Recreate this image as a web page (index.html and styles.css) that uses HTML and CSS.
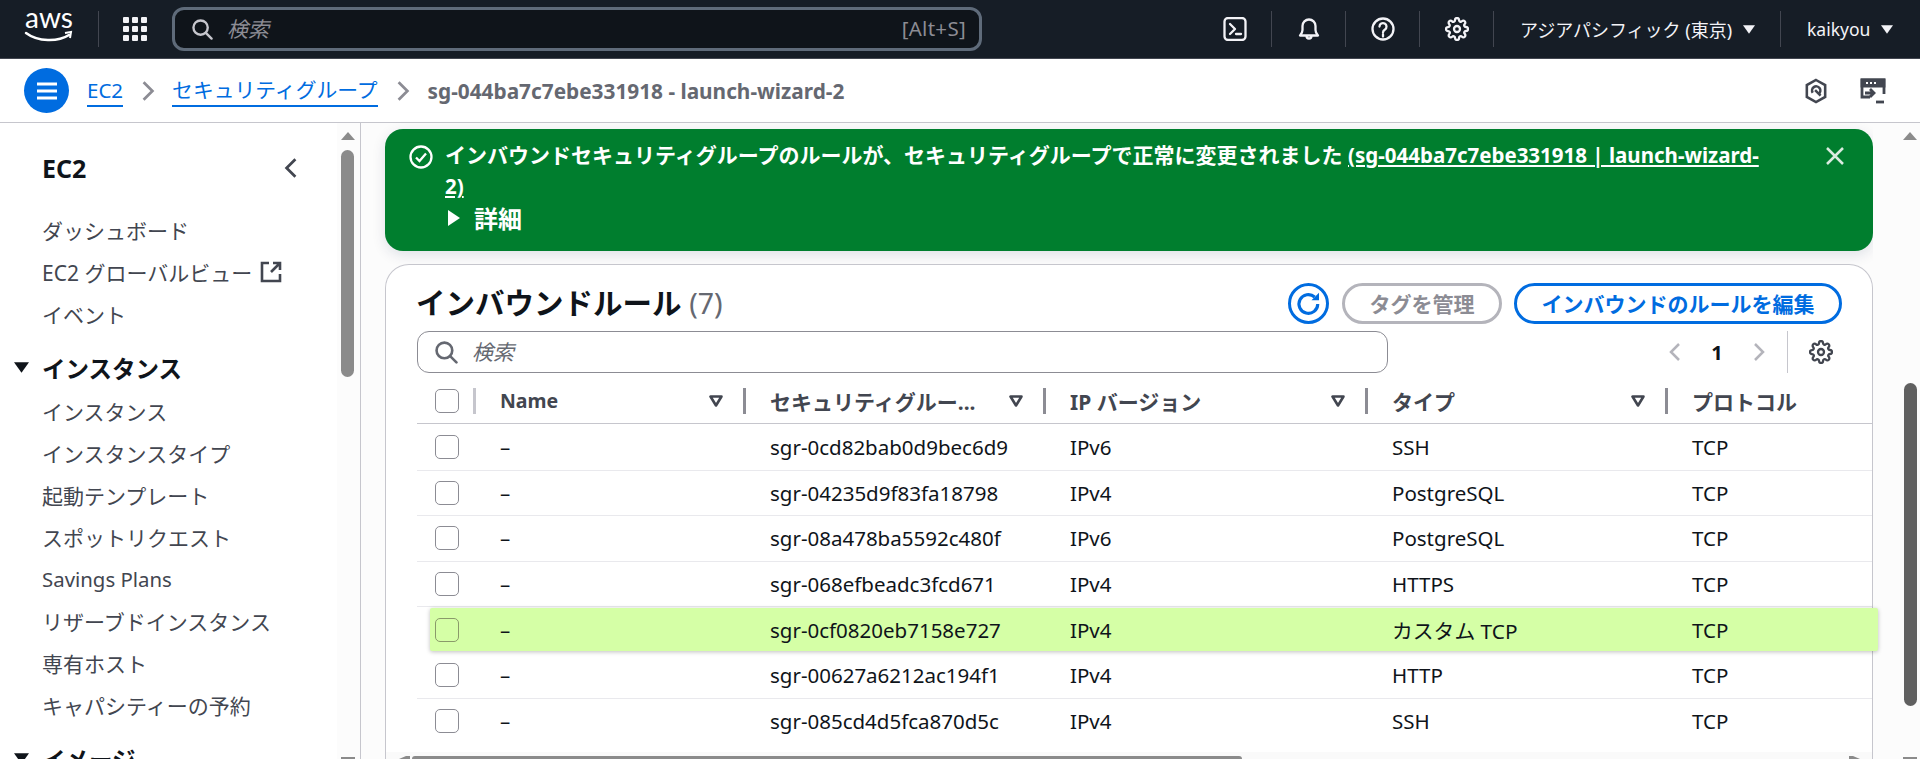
FILE: index.html
```html
<!DOCTYPE html>
<html lang="ja">
<head>
<meta charset="utf-8">
<title>EC2 セキュリティグループ</title>
<link rel="stylesheet" href="styles.css">
</head>
<body>
<svg class="sprite" aria-hidden="true">
  <symbol id="i-gear" viewBox="0 0 24 24"><circle cx="12" cy="12" r="3"/><path d="M19.4 15a1.65 1.65 0 0 0 .33 1.82l.06.06a2 2 0 0 1 0 2.83 2 2 0 0 1-2.83 0l-.06-.06a1.65 1.65 0 0 0-1.82-.33 1.65 1.65 0 0 0-1 1.51V21a2 2 0 0 1-2 2 2 2 0 0 1-2-2v-.09A1.65 1.65 0 0 0 9 19.4a1.65 1.65 0 0 0-1.82.33l-.06.06a2 2 0 0 1-2.83 0 2 2 0 0 1 0-2.83l.06-.06a1.65 1.65 0 0 0 .33-1.82 1.65 1.65 0 0 0-1.51-1H3a2 2 0 0 1-2-2 2 2 0 0 1 2-2h.09A1.65 1.65 0 0 0 4.6 9a1.65 1.65 0 0 0-.33-1.82l-.06-.06a2 2 0 0 1 0-2.83 2 2 0 0 1 2.83 0l.06.06a1.65 1.65 0 0 0 1.82.33H9a1.65 1.65 0 0 0 1-1.51V3a2 2 0 0 1 2-2 2 2 0 0 1 2 2v.09a1.65 1.65 0 0 0 1 1.51 1.65 1.65 0 0 0 1.82-.33l.06-.06a2 2 0 0 1 2.83 0 2 2 0 0 1 0 2.83l-.06.06a1.65 1.65 0 0 0-.33 1.82V9a1.65 1.65 0 0 0 1.51 1H21a2 2 0 0 1 2 2 2 2 0 0 1-2 2h-.09a1.65 1.65 0 0 0-1.51 1z"/></symbol>
  <symbol id="i-search" viewBox="0 0 22 22"><circle cx="9" cy="9" r="7.5"/><path d="M14.5 14.5 20.5 20.5"/></symbol>
  <symbol id="i-sort" viewBox="0 0 14 12"><path d="M1.5 1.5h11L7 10.5z"/></symbol>
  <symbol id="i-down" viewBox="0 0 14 10"><path d="M0 0h14L7 10z"/></symbol>
</svg>

<header class="topbar">
  <div class="logo">
    <svg class="logo-svg" viewBox="0 0 48 30"><text class="logo-text" x="24" y="15" text-anchor="middle">aws</text><path class="logo-smile" d="M1 20c12 9 32 9 43 2"/><path class="logo-arrow" d="M40 20l6-1-1 6"/></svg>
  </div>
  <span class="top-sep"></span>
  <svg class="grid-icon" viewBox="0 0 24 24"><rect x="0" y="0" width="6" height="6" rx="1"/><rect x="9" y="0" width="6" height="6" rx="1"/><rect x="18" y="0" width="6" height="6" rx="1"/><rect x="0" y="9" width="6" height="6" rx="1"/><rect x="9" y="9" width="6" height="6" rx="1"/><rect x="18" y="9" width="6" height="6" rx="1"/><rect x="0" y="18" width="6" height="6" rx="1"/><rect x="9" y="18" width="6" height="6" rx="1"/><rect x="18" y="18" width="6" height="6" rx="1"/></svg>
  <div class="top-search">
    <svg class="ic-search-top"><use href="#i-search"/></svg>
    <span class="top-search-ph">検索</span>
    <span class="top-search-key">[Alt+S]</span>
  </div>
  <nav class="top-actions">
    <div class="slot"><svg class="top-ic" viewBox="0 0 24 24"><rect x="1.500" y="1" width="21" height="22" rx="3.500"/><path d="M7 7l5 5-5 5M13 17h5"/></svg></div>
    <div class="slot"><svg class="top-ic" viewBox="0 0 24 24"><path d="M3 18.500h18c-2-2-2.500-3.500-2.500-5.500V9A6.500 6.500 0 0 0 5.500 9v4c0 2-.5 3.500-2.500 5.500zM9.500 19a2.500 2.500 0 0 0 5 0"/></svg></div>
    <div class="slot"><svg class="top-ic" viewBox="0 0 24 24"><circle cx="12" cy="12" r="10.500"/><path d="M8.500 9.500a3.500 3.500 0 1 1 5.500 3c-1.300.8-2 1.500-2 3M12 17.500v2"/></svg></div>
    <div class="slot"><svg class="top-ic"><use href="#i-gear"/></svg></div>
    <div class="slot slot-region"><span>アジアパシフィック (東京)</span><svg class="ic-down"><use href="#i-down"/></svg></div>
    <div class="slot slot-user"><span>kaikyou</span><svg class="ic-down"><use href="#i-down"/></svg></div>
  </nav>
</header>

<div class="crumbbar">
  <button class="menu-btn"><svg viewBox="0 0 22 18"><path d="M1 2h20M1 9h20M1 16h20"/></svg></button>
  <a class="crumb crumb-first">EC2</a>
  <svg class="crumb-chev" viewBox="0 0 12 20"><path d="M2 2l8 8-8 8"/></svg>
  <a class="crumb crumb-ja">セキュリティグループ</a>
  <svg class="crumb-chev" viewBox="0 0 12 20"><path d="M2 2l8 8-8 8"/></svg>
  <span class="crumb-current">sg-044ba7c7ebe331918 - launch-wizard-2</span>
  <div class="crumb-tools">
    <svg class="tool-ic tool-hex" viewBox="0 0 24 28"><path d="M12 2 22 7.500v13L12 26 2 20.500v-13z"/><path d="M8.500 16a4.500 4.500 0 1 1 6.500 1"/><path d="M11 13l6 6"/></svg>
    <svg class="tool-ic tool-term" viewBox="0 0 26 26"><path d="M10 19H2V2h22v14"/><path class="tool-fill" d="M2 2h22v6H2z"/><path class="tool-dots" d="M6 4h2v2H6zM10 4h2v2h-2zM14 4h2v2h-2z"/><path d="M5 15h9M10 11l4 4-4 4"/><path d="M16 24h8"/></svg>
  </div>
</div>

<div class="workspace">
  <aside class="sidebar">
    <div class="side-nav">
      <div class="side-head"><h2 class="side-title">EC2</h2><svg class="side-close" viewBox="0 0 12 20"><path d="M10 2 2 10l8 8"/></svg></div>
      <a class="side-item">ダッシュボード</a>
      <a class="side-item">EC2 グローバルビュー <svg class="ext-ic" viewBox="0 0 22 22"><path d="M9 2H2v18h18v-7"/><path d="M13 2h7v7M20 2l-9 9"/></svg></a>
      <a class="side-item">イベント</a>
      <div class="side-group"><svg class="group-caret"><use href="#i-down"/></svg>インスタンス</div>
      <a class="side-item">インスタンス</a>
      <a class="side-item">インスタンスタイプ</a>
      <a class="side-item">起動テンプレート</a>
      <a class="side-item">スポットリクエスト</a>
      <a class="side-item side-latin">Savings Plans</a>
      <a class="side-item">リザーブドインスタンス</a>
      <a class="side-item">専有ホスト</a>
      <a class="side-item">キャパシティーの予約</a>
      <div class="side-group"><svg class="group-caret"><use href="#i-down"/></svg>イメージ</div>
    </div>
    <div class="vbar vbar-side">
      <span class="arrow-up"></span>
      <span class="thumb thumb-side"></span>
      <span class="arrow-end"></span>
    </div>
  </aside>

  <main class="main">
    <div class="content">
      <section class="flash">
        <svg class="flash-ic" viewBox="0 0 24 24"><circle cx="12" cy="12" r="10.500"/><path d="M7 12.500l3.500 3.500L17 8.500"/></svg>
        <div class="flash-body">
          <p class="flash-msg">インバウンドセキュリティグループのルールが、セキュリティグループで正常に変更されました <a class="flash-link">(sg-044ba7c7ebe331918 | launch-wizard-<wbr>2)</a></p>
          <div class="flash-detail"><span class="tri-right"></span>詳細</div>
        </div>
        <svg class="flash-close" viewBox="0 0 20 20"><path d="M2 2l16 16M18 2 2 18"/></svg>
      </section>

      <section class="card">
        <div class="card-head">
          <h1 class="card-title">インバウンドルール <span class="count">(7)</span></h1>
          <div class="card-actions">
            <button class="btn-round"><svg viewBox="0 0 24 24"><path d="M19 12a7.500 7.500 0 1 1-2.500-5.600"/><path class="btn-fill" d="M14 9h6V3z"/></svg></button>
            <button class="btn btn-off">タグを管理</button>
            <button class="btn btn-on">インバウンドのルールを編集</button>
          </div>
        </div>
        <div class="filter-row">
          <div class="filter">
            <svg class="ic-search"><use href="#i-search"/></svg>
            <span class="filter-ph">検索</span>
          </div>
          <div class="pager">
            <svg class="pg-chev" viewBox="0 0 12 20"><path d="M10 2 2 10l8 8"/></svg>
            <span class="pg-num">1</span>
            <svg class="pg-chev" viewBox="0 0 12 20"><path d="M2 2l8 8-8 8"/></svg>
            <span class="pg-sep"></span>
            <svg class="pg-gear"><use href="#i-gear"/></svg>
          </div>
        </div>

        <div class="table">
          <div class="row row-head">
            <div class="cell cell-check"><span class="check"></span></div>
            <div class="cell th"><span class="th-latin">Name</span><svg class="ic-sort"><use href="#i-sort"/></svg></div>
            <div class="cell th"><span>セキュリティグルー...</span><svg class="ic-sort"><use href="#i-sort"/></svg></div>
            <div class="cell th"><span>IP バージョン</span><svg class="ic-sort"><use href="#i-sort"/></svg></div>
            <div class="cell th"><span>タイプ</span><svg class="ic-sort"><use href="#i-sort"/></svg></div>
            <div class="cell th th-last"><span>プロトコル</span></div>
          </div>
          <div class="row"><div class="cell cell-check"><span class="check"></span></div><div class="cell">–</div><div class="cell">sgr-0cd82bab0d9bec6d9</div><div class="cell">IPv6</div><div class="cell">SSH</div><div class="cell">TCP</div></div>
          <div class="row"><div class="cell cell-check"><span class="check"></span></div><div class="cell">–</div><div class="cell">sgr-04235d9f83fa18798</div><div class="cell">IPv4</div><div class="cell">PostgreSQL</div><div class="cell">TCP</div></div>
          <div class="row"><div class="cell cell-check"><span class="check"></span></div><div class="cell">–</div><div class="cell">sgr-08a478ba5592c480f</div><div class="cell">IPv6</div><div class="cell">PostgreSQL</div><div class="cell">TCP</div></div>
          <div class="row"><div class="cell cell-check"><span class="check"></span></div><div class="cell">–</div><div class="cell">sgr-068efbeadc3fcd671</div><div class="cell">IPv4</div><div class="cell">HTTPS</div><div class="cell">TCP</div></div>
          <div class="row row-hl"><div class="cell cell-check"><span class="check"></span></div><div class="cell">–</div><div class="cell">sgr-0cf0820eb7158e727</div><div class="cell">IPv4</div><div class="cell cell-ja">カスタム TCP</div><div class="cell">TCP</div></div>
          <div class="row"><div class="cell cell-check"><span class="check"></span></div><div class="cell">–</div><div class="cell">sgr-00627a6212ac194f1</div><div class="cell">IPv4</div><div class="cell">HTTP</div><div class="cell">TCP</div></div>
          <div class="row row-end"><div class="cell cell-check"><span class="check"></span></div><div class="cell">–</div><div class="cell">sgr-085cd4d5fca870d5c</div><div class="cell">IPv4</div><div class="cell">SSH</div><div class="cell">TCP</div></div>
        </div>
        <div class="hbar">
          <span class="arrow-left"></span>
          <span class="thumb-h"></span>
          <span class="arrow-right"></span>
        </div>
      </section>
    </div>
    <div class="vbar vbar-main">
      <span class="arrow-up"></span>
      <span class="thumb thumb-main"></span>
      <span class="arrow-end"></span>
    </div>
  </main>
</div>
</body>
</html>
```

FILE: styles.css
```css
* { box-sizing: border-box; }
html, body { margin: 0; padding: 0; height: 759px; overflow: hidden; }
body {
  font-family: "Noto Sans", "Noto Sans CJK JP", sans-serif;
  font-size: 20px;
  color: #0f141a;
  background: #fff;
  display: flex;
  flex-direction: column;
}
.sprite { width: 0; height: 0; position: absolute; }
h1, h2, p { margin: 0; }
button { font-family: inherit; cursor: pointer; padding: 0; background: none; }

/* top bar */
.topbar {
  flex: 0 0 59px;
  display: flex;
  align-items: center;
  background: #161d26;
  border-bottom: 1px solid #424650;
  padding-left: 25px;
  color: #fff;
}
.logo { width: 48px; height: 30px; margin-bottom: 2px; }
.logo-svg { width: 48px; height: 30px; display: block; overflow: visible; }
.logo-text { font: 400 28px "Lato", "Noto Sans", sans-serif; fill: #fff; }
.logo-smile { fill: none; stroke: #fff; stroke-width: 2.500; stroke-linecap: round; }
.logo-arrow { fill: none; stroke: #fff; stroke-width: 2; }
.top-sep { width: 1px; height: 36px; background: #424650; margin-left: 25px; }
.grid-icon { width: 24px; height: 24px; margin-left: 24px; fill: #f3f3f7; }
.top-search {
  width: 810px;
  height: 44px;
  margin-left: 25px;
  display: flex;
  align-items: center;
  background: #0f141a;
  border: 3px solid #5f6b7a;
  border-radius: 12px;
  padding: 0 13px 0 17px;
}
.ic-search-top { width: 21px; height: 21px; fill: none; stroke: #c6c6cd; stroke-width: 2.500; stroke-linecap: round; }
.top-search-ph { margin: 0 0 3px 14px; font-style: italic; font-size: 21px; color: #8c8c94; }
.top-search-key { margin: 0 0 3px auto; font-size: 20.500px; letter-spacing: .3px; color: #8c8c94; }
.top-actions { margin-left: auto; display: flex; align-items: center; }
.slot {
  height: 36px;
  width: 74px;
  display: flex;
  align-items: center;
  justify-content: center;
  border-right: 1px solid #424650;
  font-size: 17.500px;
  color: #f3f3f7;
}
.top-ic { width: 24px; height: 24px; fill: none; stroke: #f3f3f7; stroke-width: 2.300; stroke-linecap: round; stroke-linejoin: round; }
.slot-region { width: 287px; justify-content: flex-start; padding-left: 26px; font-size: 18px; }
.slot-user { width: 139px; justify-content: flex-start; padding-left: 26px; border-right: 0; }
.ic-down { width: 12px; height: 9px; margin-left: 11px; fill: #f3f3f7; }

/* breadcrumbs */
.crumbbar {
  flex: 0 0 64px;
  display: flex;
  align-items: center;
  border-bottom: 1px solid #c6c6cd;
  padding-left: 24px;
}
.menu-btn {
  width: 45px;
  height: 45px;
  border: 0;
  border-radius: 50%;
  background: #006ce0;
  display: flex;
  align-items: center;
  justify-content: center;
}
.menu-btn svg { width: 22px; height: 18px; fill: none; stroke: #fff; stroke-width: 3; }
.crumb {
  color: #006ce0;
  font-size: 20.500px;
  line-height: 30px;
  border-bottom: 2px solid #006ce0;
}
.crumb-ja { font-size: 20.800px; margin-left: -1px; }
.crumb-first { margin-left: 18px; }
.crumb-chev { width: 14px; height: 22px; margin: 0 18px; fill: none; stroke: #8c8c94; stroke-width: 2.500; }
.crumb-current { font-size: 20.800px; font-weight: 700; color: #656871; }
.crumb-tools { margin-left: auto; display: flex; align-items: center; gap: 33px; padding-right: 34px; }
.tool-ic { fill: none; stroke: #424650; stroke-width: 2.800; }
.tool-hex { width: 22px; height: 26px; }
.tool-term { width: 26px; height: 26px; }
.tool-fill { fill: #424650; }
.tool-dots { fill: #fff; stroke: none; }

/* workspace */
.workspace { flex: 1; min-height: 0; display: flex; }
.sidebar {
  flex: 0 0 361px;
  display: flex;
  border-right: 1px solid #c6c6cd;
  background: #fff;
}
.side-nav { flex: 1; overflow: hidden; padding: 22px 0 0 42px; }
.side-head { display: flex; align-items: center; justify-content: space-between; padding-right: 39px; height: 46px; margin-bottom: 18px; }
.side-title { font-size: 25px; font-weight: 700; }
.side-close { width: 14px; height: 22px; fill: none; stroke: #424650; stroke-width: 2.500; }
.side-item {
  display: flex;
  align-items: center;
  height: 42px;
  font-size: 21px;
  color: #424650;
  white-space: nowrap;
}
.side-latin { font-size: 20.400px; }
.ext-ic { width: 22px; height: 22px; margin-left: 8px; fill: none; stroke: #424650; stroke-width: 2.600; }
.side-group {
  display: flex;
  align-items: center;
  height: 46px;
  margin: 9.500px 0 -.5px -28px;
  font-size: 23.500px;
  font-weight: 700;
  color: #0f141a;
}
.group-caret { width: 15px; height: 11px; margin-right: 13px; fill: #0f141a; }
.vbar { display: flex; flex-direction: column; align-items: center; background: #fcfcfc; }
.vbar-side { flex: 0 0 23px; padding-top: 9px; padding-right: 2px; }
.arrow-up {
  width: 0; height: 0;
  border-left: 7px solid transparent;
  border-right: 7px solid transparent;
  border-bottom: 8px solid #8b8b8b;
}
.arrow-end { width: 14px; height: 2px; margin-top: auto; background: #8b8b8b; }
.thumb { width: 13px; border-radius: 7px; }
.thumb-side { height: 227px; margin-top: 10px; background: #8b8b8b; }

/* main */
.main { flex: 1; min-width: 0; display: flex; background: #fcfcfc; }
.content { flex: 1; min-width: 0; padding: 6px 0 0 24px; }
.vbar-main { flex: 0 0 47px; align-items: flex-end; padding: 9px 3px 0 0; }
.thumb-main { height: 323px; margin-top: 243px; background: #606060; }

.flash {
  height: 122px;
  display: flex;
  background: #007e2e;
  border-radius: 18px;
  box-shadow: 0 4px 14px rgba(0, 34, 75, .12);
  color: #fff;
  padding: 14px 28px 0 24px;
}
.flash-ic { flex: 0 0 24px; width: 24px; height: 24px; margin-top: 2px; fill: none; stroke: #fff; stroke-width: 2.300; }
.flash-body { width: 1320px; margin-left: 12px; }
.flash-msg { font-size: 21px; font-weight: 700; line-height: 31px; margin-top: -3px; }
.flash-link { font-size: 20.500px; text-decoration: underline; }
.flash-detail { display: flex; align-items: center; font-size: 24px; font-weight: 700; height: 33px; margin-top: -1px; }
.tri-right {
  width: 0; height: 0;
  margin: 0 14px 0 3px;
  border-top: 8px solid transparent;
  border-bottom: 8px solid transparent;
  border-left: 12px solid #fff;
}
.flash-close { margin-left: auto; width: 20px; height: 20px; margin-top: 3px; fill: none; stroke: #fff; stroke-width: 2.500; opacity: .85; }

.card {
  height: 495px;
  margin-top: 13px;
  background: #fff;
  border: 1px solid #c6c6cd;
  border-bottom: 0;
  border-radius: 24px 24px 0 0;
  display: flex;
  flex-direction: column;
}
.card-head { display: flex; align-items: center; justify-content: space-between; height: 41px; margin-top: 18px; padding: 0 30px; }
.card-title { font-size: 29.500px; font-weight: 700; line-height: 41px; margin-top: -2px; white-space: nowrap; }
.count { font-weight: 400; font-size: 28.500px; color: #656871; }
.card-actions { display: flex; align-items: center; gap: 12px; }
.btn-round {
  width: 41px; height: 41px;
  margin-right: 1px;
  border: 3px solid #006ce0;
  border-radius: 50%;
  background: #fff;
  display: flex; align-items: center; justify-content: center;
}
.btn-round svg { width: 30px; height: 30px; fill: none; stroke: #006ce0; stroke-width: 2.500; }
.btn-fill { fill: #006ce0; stroke: none; }
.btn {
  height: 41px;
  border-radius: 21px;
  border-width: 3px;
  border-style: solid;
  background: #fff;
  font-size: 21px;
  font-weight: 700;
  white-space: nowrap;
  padding-bottom: 2px;
}
.btn-off { width: 160px; border-color: #b4b4bb; color: #8c8c94; }
.btn-on { width: 328px; border-color: #006ce0; color: #006ce0; }

.filter-row { display: flex; align-items: center; height: 42px; margin-top: 7px; padding: 0 31px; }
.filter {
  width: 971px;
  height: 42px;
  border: 1px solid #8c8c94;
  border-radius: 12px;
  display: flex;
  align-items: center;
  padding-left: 17px;
}
.ic-search { width: 23px; height: 23px; fill: none; stroke: #656871; stroke-width: 2.500; stroke-linecap: round; }
.filter-ph { margin: 0 0 2px 14px; font-style: italic; font-size: 21px; color: #656871; }
.pager { margin-left: auto; display: flex; align-items: center; height: 42px; padding-right: 8px; }
.pg-chev { width: 12px; height: 22px; fill: none; stroke: #b4b4bb; stroke-width: 2.500; }
.pg-num { width: 72px; text-align: center; font-size: 20px; font-weight: 700; }
.pg-sep { width: 1px; height: 42px; background: #c6c6cd; margin-left: 22px; }
.pg-gear { width: 24px; height: 24px; margin-left: 21px; fill: none; stroke: #424650; stroke-width: 2.300; stroke-linecap: round; }

.table { flex: 1; min-height: 0; margin-top: 5px; padding-left: 31px; }
.row {
  display: grid;
  grid-template-columns: 59px 270px 300px 322px 300px 1fr;
  height: 45.500px;
  border-bottom: 1px solid #e9e9ed;
  align-items: center;
  font-size: 20.500px;
}
.row-head { height: 46px; margin-bottom: 1px; border-bottom: 1px solid #c6c6cd; font-weight: 700; color: #424650; }
.row-end { border-bottom: 0; }
.row-hl {
  position: relative;
  grid-template-columns: 46px 270px 300px 322px 300px 1fr;
  height: 43px;
  margin: 1px -6px 2px 13px;
  background: #d5ffa6;
  border-bottom: 0;
  box-shadow: 0 1px 4px rgba(0, 0, 0, .25);
  border-radius: 2px;
}
.cell { padding-left: 24px; white-space: nowrap; }
.cell-ja { font-size: 20.800px; }
.cell-check { padding-left: 18px; display: flex; align-items: center; }
.row-hl .cell-check { padding-left: 5px; }
.check {
  width: 24px; height: 24px;
  border: 1.500px solid #8c8c94;
  border-radius: 5px;
  display: block;
}
.row-hl .check { border-color: #8a9a6a; }
.row-head .cell-check { height: 26px; border-right: 3px solid #c6c6cd; }
.th {
  display: flex;
  align-items: center;
  justify-content: space-between;
  height: 26px;
  padding-right: 20px;
  font-size: 21px;
  border-right: 3px solid #8c8c94;
}
.th-latin { font-size: 19.500px; }
.th-last { border-right: 0; }
.ic-sort { width: 14px; height: 12px; fill: none; stroke: #424650; stroke-width: 2.600; stroke-linejoin: round; }

.hbar { flex: 0 0 7px; display: flex; align-items: flex-end; background: #fafafa; padding-left: 13px; }
.arrow-left {
  width: 0; height: 0;
  border-bottom: 3px solid #8b8b8b;
  border-left: 7px solid transparent;
  border-right: 4px solid #8b8b8b;
}
.thumb-h { width: 830px; height: 3px; margin-left: 2px; background: #8b8b8b; border-radius: 3px 3px 0 0; }
.arrow-right {
  width: 0; height: 0;
  margin-left: auto;
  margin-right: 12px;
  border-bottom: 3px solid #8b8b8b;
  border-right: 7px solid transparent;
  border-left: 4px solid #8b8b8b;
}
```
